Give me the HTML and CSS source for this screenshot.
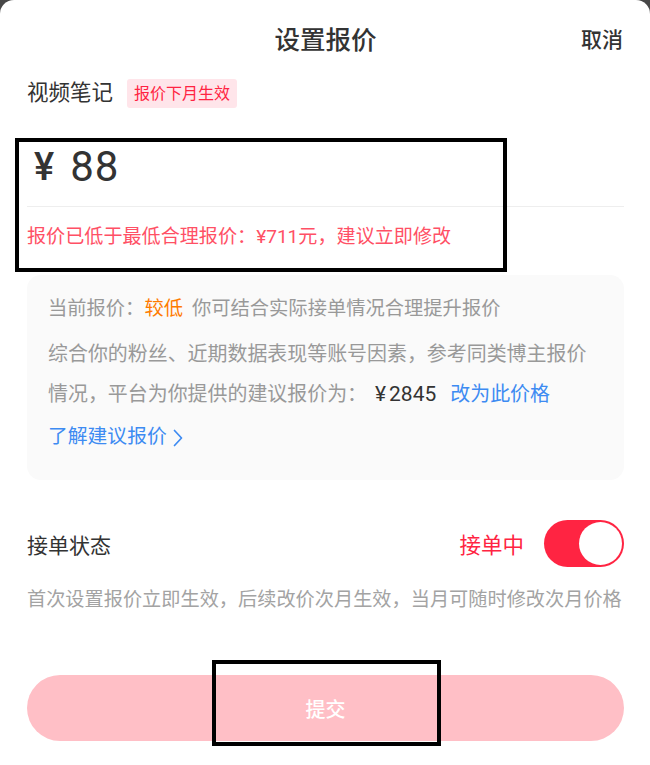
FILE: index.html
```html
<!DOCTYPE html>
<html lang="zh-CN">
<head>
<meta charset="utf-8">
<title>设置报价</title>
<link rel="stylesheet" href="styles.css">
</head>
<body>
<div class="sheet">
  <header class="header">
    <h1 class="title">设置报价</h1>
    <span class="cancel">取消</span>
  </header>

  <div class="type-row">
    <span class="type-name">视频笔记</span>
    <span class="badge">报价下月生效</span>
  </div>

  <div class="price-row">
    <span class="yen">¥</span><span class="amount">88</span>
  </div>
  <p class="warning">报价已低于最低合理报价：¥711元，建议立即修改</p>

  <section class="card">
    <p class="card-line first">当前报价：<span class="low">较低</span><span class="gap"></span>你可结合实际接单情况合理提升报价</p>
    <p class="card-line para">综合你的粉丝、近期数据表现等账号因素，参考同类博主报价<br>情况，平台为你提供的建议报价为：<span class="sugg"><span class="sugg-yen">¥</span>2845</span><span class="link">改为此价格</span></p>
    <p class="card-line more"><span class="link">了解建议报价</span><svg class="chev" width="12" height="20" viewBox="0 0 12 20"><path d="M2.5 2.5 L9.5 10 L2.5 17.5" fill="none" stroke="#3d8bf2" stroke-width="1.7" stroke-linecap="round" stroke-linejoin="round"/></svg></p>
  </section>

  <div class="status-row">
    <span class="status-label">接单状态</span>
    <div class="status-right">
      <span class="status-on">接单中</span>
      <span class="toggle"><span class="knob"></span></span>
    </div>
  </div>
  <p class="help">首次设置报价立即生效，后续改价次月生效，当月可随时修改次月价格</p>

  <button class="submit" type="button">提交</button>

  <div class="mark mark-price"></div>
  <div class="mark mark-submit"></div>
</div>
</body>
</html>
```

FILE: styles.css
```css
* { box-sizing: border-box; }
html, body { margin: 0; padding: 0; }
body {
  background: #474747;
  font-family: Roboto, "Noto Sans CJK SC", "Noto Sans", sans-serif;
  color: #333;
}
.sheet {
  position: relative;
  width: 650px;
  height: 765px;
  background: #fff;
  border-radius: 14px 14px 0 0;
  padding: 0 26px 0 27px;
  overflow: hidden;
}
.header {
  position: relative;
  height: 77px;
  display: flex;
  align-items: center;
  justify-content: center;
}
.title {
  margin: 0;
  font-size: 25.5px;
  font-weight: 500;
  color: #333;
  line-height: 30px;
  padding-top: 2px;
}
.cancel {
  position: absolute;
  right: 1px;
  top: 25px;
  font-size: 21px;
  line-height: 30px;
  color: #333;
  font-weight: 500;
}
.type-row {
  display: flex;
  align-items: center;
  height: 32px;
}
.type-name {
  font-size: 21.5px;
  color: #333;
  line-height: 30px;
}
.badge {
  margin-left: 14px;
  background: #ffe5ea;
  color: #ff2442;
  font-size: 16px;
  line-height: 29px;
  height: 29px;
  padding: 0 7px;
  border-radius: 3px;
}
.price-row {
  margin-top: 36px;
  height: 44px;
  line-height: 44px;
  padding-left: 7px;
  display: flex;
  align-items: center;
}
.yen {
  font-family: Roboto, sans-serif;
  font-size: 38px;
  font-weight: 500;
  color: #333;
  margin-right: 16px;
}
.amount {
  font-size: 42px;
  color: #333;
  letter-spacing: 1px;
}
.warning {
  margin: 0;
  border-top: 1px solid #eeeeee;
  margin-top: 17px;
  padding-top: 17px;
  font-size: 19.1px;
  line-height: 26px;
  color: #ff5065;
}
.card {
  margin-top: 25px;
  background: #fafafa;
  border-radius: 14px;
  padding: 14px 12px 23px 21px;
  height: 205px;
}
.card-line {
  margin: 0;
  font-size: 19.3px;
  line-height: 40px;
  color: #999;
  white-space: nowrap;
}
.card-line.para { margin-top: 5px; font-size: 19.95px; }
.card-line.more { margin-top: 3px; display: flex; align-items: center; font-size: 19.8px; }
.low { color: #ff7a00; }
.gap { display: inline-block; width: 9px; }
.sugg { color: #333; margin-left: 8px; margin-right: 14px; font-size: 21px; }
.sugg-yen { margin-right: 3px; }
.link { color: #3d8bf2; }
.chev { margin-left: 5px; margin-top: 1px; }
.status-row {
  margin-top: 40px;
  height: 47px;
  display: flex;
  align-items: center;
  justify-content: space-between;
}
.status-label {
  font-size: 21px;
  color: #333;
}
.status-right {
  display: flex;
  align-items: center;
}
.status-on {
  font-size: 21.5px;
  color: #ff2442;
  margin-right: 20px;
}
.toggle {
  width: 80px;
  height: 47px;
  border-radius: 24px;
  background: #ff2442;
  display: flex;
  align-items: center;
  justify-content: flex-end;
  padding-right: 2px;
}
.knob {
  width: 43px;
  height: 43px;
  border-radius: 50%;
  background: #fff;
}
.help {
  margin: 20px 0 0;
  font-size: 19.2px;
  line-height: 26px;
  color: #a3a3a3;
  white-space: nowrap;
}
.submit {
  display: block;
  width: 100%;
  margin-top: 62px;
  height: 66px;
  border: none;
  border-radius: 33px;
  background: #ffbfc6;
  color: #fff;
  font-family: inherit;
  font-size: 20px;
  font-weight: 500;
  padding: 0;
}
.mark {
  position: absolute;
  border: 4px solid #000;
  pointer-events: none;
}
.mark-price {
  left: 15px;
  top: 138px;
  width: 492px;
  height: 134px;
}
.mark-submit {
  left: 212px;
  top: 660px;
  width: 229px;
  height: 86px;
}
```
